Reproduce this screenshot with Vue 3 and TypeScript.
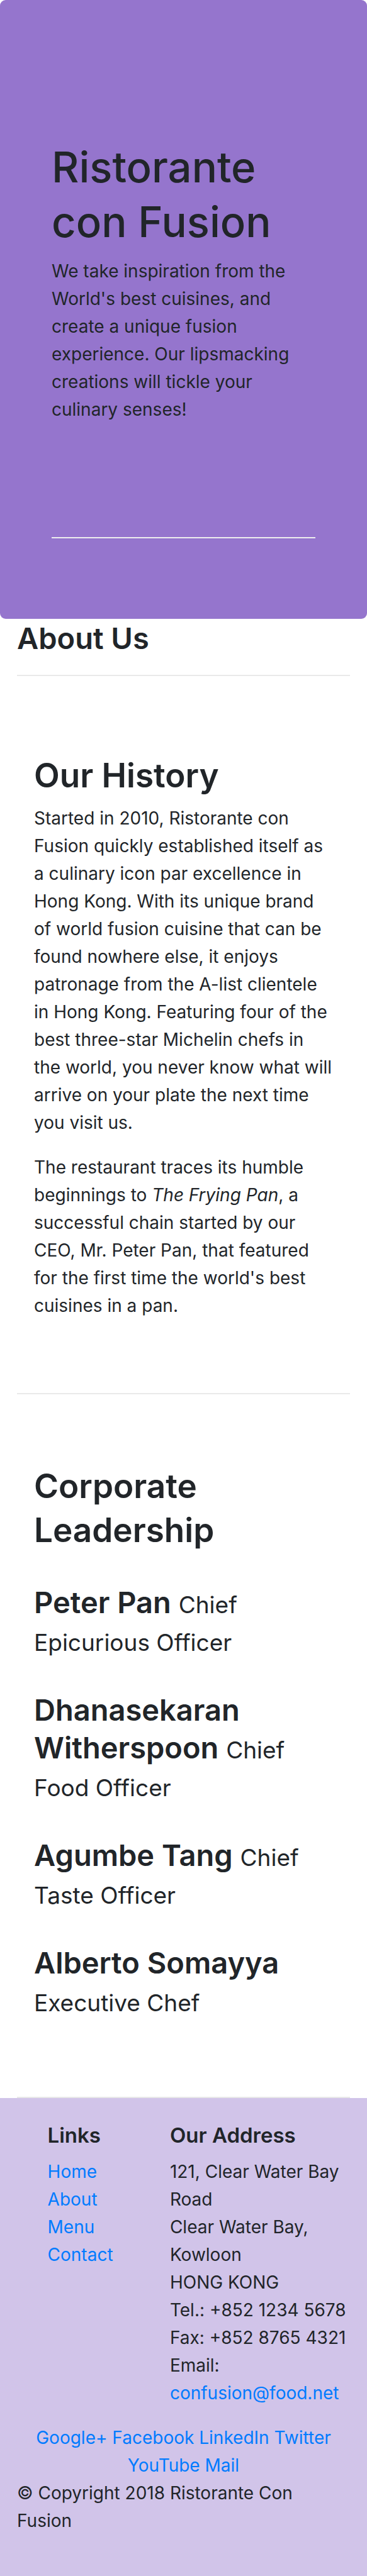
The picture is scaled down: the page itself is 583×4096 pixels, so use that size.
<script setup lang="ts">
interface Leader {
  name: string
  role: string
}

const leaders: Leader[] = [
  { name: 'Peter Pan', role: 'Chief Epicurious Officer' },
  { name: 'Dhanasekaran Witherspoon', role: 'Chief Food Officer' },
  { name: 'Agumbe Tang', role: 'Chief Taste Officer' },
  { name: 'Alberto Somayya', role: 'Executive Chef' },
]

const siteLinks: string[] = ['Home', 'About', 'Menu', 'Contact']
const socialLinks: string[] = ['Google+', 'Facebook', 'LinkedIn', 'Twitter', 'YouTube', 'Mail']
</script>

<template>
  <div class="page">
    <header class="hero">
      <h1>Ristorante con Fusion</h1>
      <p>
        We take inspiration from the World's best cuisines, and create a unique fusion experience.
        Our lipsmacking creations will tickle your culinary senses!
      </p>
      <hr />
    </header>

    <main class="content">
      <h3 class="title">About Us</h3>
      <hr />
      <section class="history">
        <h2>Our History</h2>
        <p>
          Started in 2010, Ristorante con Fusion quickly established itself as a culinary icon par
          excellence in Hong Kong. With its unique brand of world fusion cuisine that can be found
          nowhere else, it enjoys patronage from the A-list clientele in Hong Kong. Featuring four of
          the best three-star Michelin chefs in the world, you never know what will arrive on your
          plate the next time you visit us.
        </p>
        <p>
          The restaurant traces its humble beginnings to <em>The Frying Pan</em>, a successful chain
          started by our CEO, Mr. Peter Pan, that featured for the first time the world's best
          cuisines in a pan.
        </p>
      </section>
      <hr />
      <section class="leadership">
        <h2>Corporate Leadership</h2>
        <h3 v-for="leader in leaders" :key="leader.name">
          {{ leader.name }} <small>{{ leader.role }}</small>
        </h3>
      </section>
      <hr />
    </main>

    <footer class="footer">
      <div class="columns">
        <nav class="links" aria-label="Links">
          <h5>Links</h5>
          <ul>
            <li v-for="link in siteLinks" :key="link"><a href="#">{{ link }}</a></li>
          </ul>
        </nav>
        <div class="contact">
          <h5>Our Address</h5>
          <address>
            121, Clear Water Bay Road<br />
            Clear Water Bay, Kowloon<br />
            HONG KONG<br />
            Tel.: +852 1234 5678<br />
            Fax: +852 8765 4321<br />
            Email: <a href="mailto:confusion@food.net">confusion@food.net</a>
          </address>
        </div>
      </div>
      <div class="social">
        <template v-for="link in socialLinks" :key="link"><a href="#">{{ link }}</a>{{ ' ' }}</template>
      </div>
      <p class="copyright">© Copyright 2018 Ristorante Con Fusion</p>
    </footer>
  </div>
</template>

<style>
body {
  margin: 0;
  background: #fff;
}
</style>

<style scoped>
.page {
  font-family: Inter, 'Liberation Sans', sans-serif;
  font-size: 28px;
  line-height: 44px;
  color: #212529;
}

h1,
h2,
h3,
h5,
p,
ul {
  margin: 0;
}

h2,
h3,
h5 {
  font-weight: 600;
}

h1 {
  font-size: 67px;
  font-weight: 500;
  line-height: 87px;
}

h2 {
  font-size: 53px;
  line-height: 70px;
}

h3 {
  font-size: 47px;
  line-height: 60px;
}

h5 {
  margin-bottom: 14px;
  font-size: 33px;
  line-height: 44px;
}

small {
  font-size: 37px;
  font-weight: 400;
  line-height: 1;
}

hr {
  height: 2px;
  margin: 0;
  border: 0;
  background: #e9e9e9;
}

a {
  color: #007bff;
  text-decoration: none;
}

.hero {
  padding: 222px 82px 128px;
  border-radius: 9px;
  background: #9575cd;
}

.hero h1 {
  margin-bottom: 13px;
}

.hero hr {
  margin-top: 181px;
  background: #eee;
}

.content {
  padding: 1px 27px 0;
}

.title {
  margin-bottom: 28px;
}

.history {
  padding: 123px 27px 117px;
}

.history h2 {
  margin-bottom: 11px;
}

.history p + p {
  margin-top: 27px;
}

.leadership {
  padding: 111px 27px 123px;
}

.leadership h2 {
  margin-bottom: 50px;
}

.leadership h3 + h3 {
  margin-top: 51px;
}

.footer {
  padding: 37px 27px 66px;
  background: #d1c4e9;
}

.columns {
  display: grid;
  grid-template-columns: minmax(0, 1fr) minmax(0, 4fr) minmax(0, 7fr);
  margin: 0 -27px;
}

.links {
  grid-column: 2;
}

.links,
.contact {
  padding-left: 27px;
}

ul {
  padding: 0;
  list-style: none;
}

address {
  font-style: normal;
}

.social {
  margin-top: 27px;
  text-align: center;
}
</style>
